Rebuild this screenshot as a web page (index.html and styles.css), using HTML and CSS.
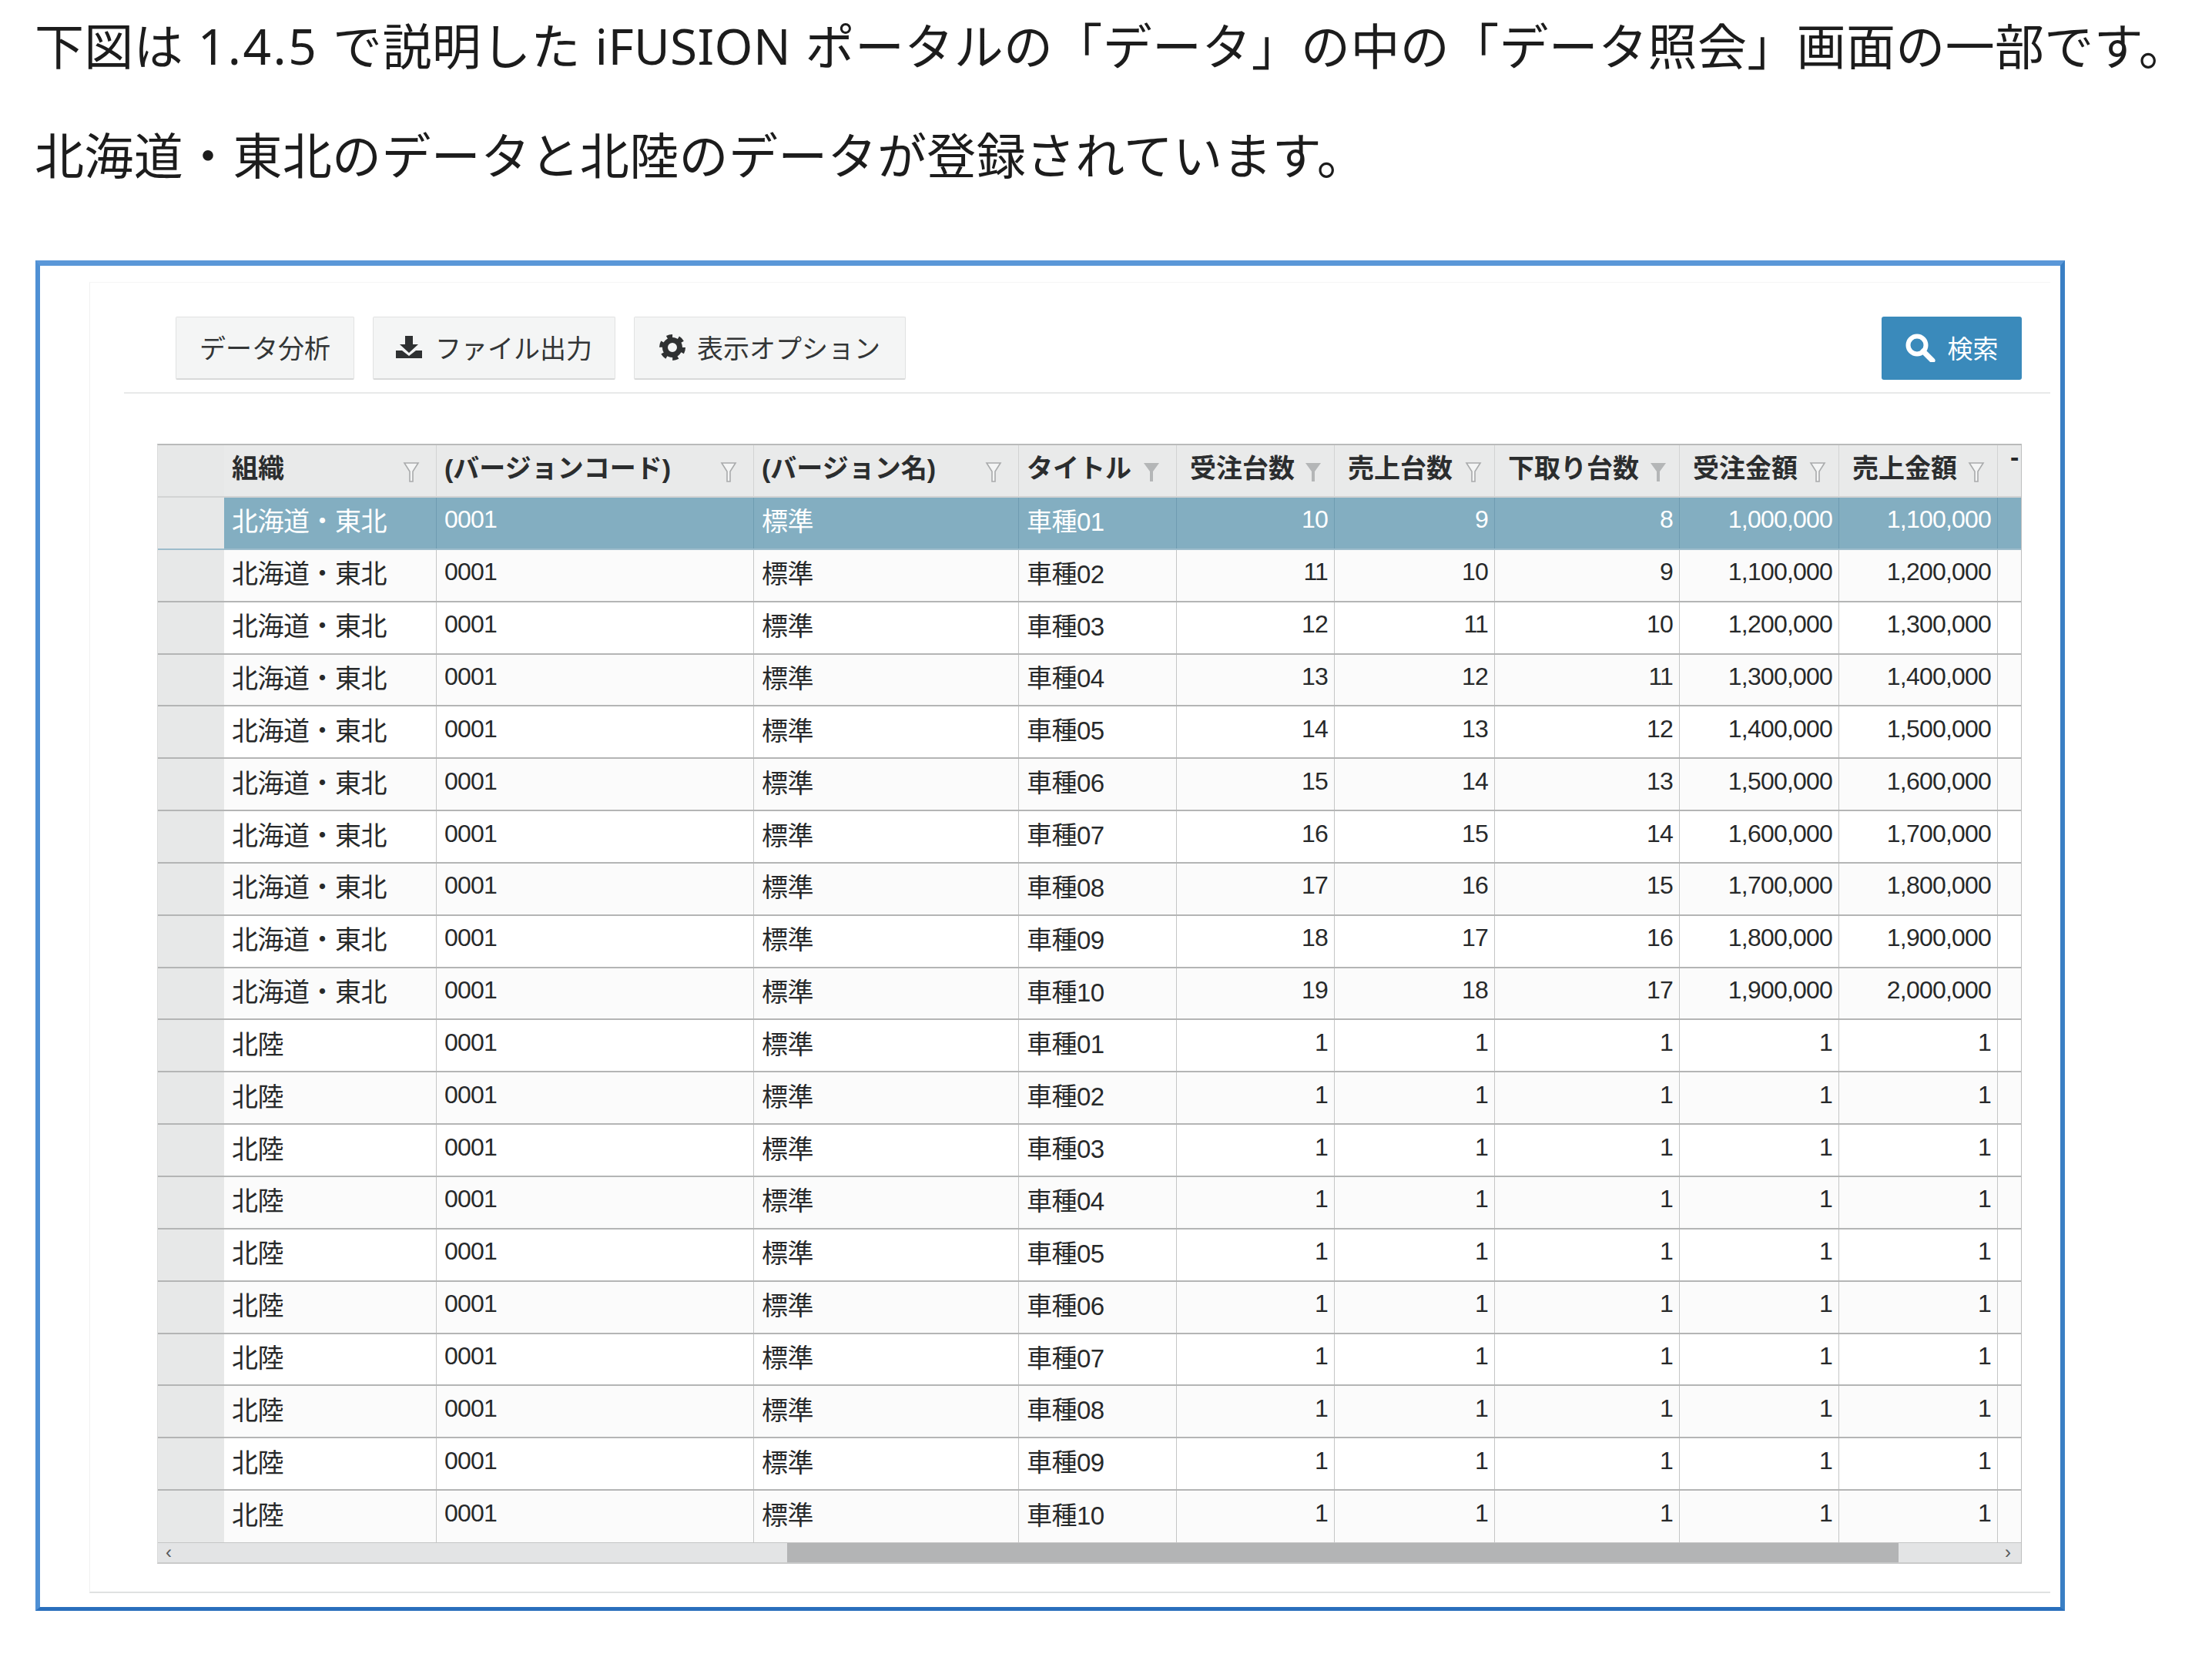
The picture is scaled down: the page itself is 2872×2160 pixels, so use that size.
FILE: index.html
```html
<!DOCTYPE html>
<html lang="ja">
<head>
<meta charset="utf-8">
<title>データ照会</title>
<link rel="stylesheet" href="styles.css">
</head>
<body>
<svg class="defs" width="0" height="0" aria-hidden="true">
  <symbol id="funnel" viewBox="0 0 22 26"><path d="M2 1h18l-7 11v13h-4V12z" fill="#fff" fill-opacity=".5" stroke="#a9abac" stroke-width="1.6"/></symbol>
  <symbol id="funnel-on" viewBox="0 0 22 26"><path d="M1 1h20l-8 11v13H9V12z" fill="#b4b6b7"/></symbol>
</svg>
<p class="lead first">下図は <span class="latin num">1.4.5</span> で説明した <span class="latin">iFUSION</span> ポータルの「データ」の中の「データ照会」画面の一部です。</p>
<p class="lead second">北海道・東北のデータと北陸のデータが登録されています。</p>
<section class="frame">
  <div class="panel">
    <div class="toolbar">
      <button class="btn btn-a">データ分析</button>
      <button class="btn btn-b"><svg class="ico-dl" viewBox="0 0 34 29"><path d="M12 0h10v11h7L17 22 5 11h7z" fill="#2f3132"/><path d="M0 19h8l9 7 9-7h8v10H0z" fill="#2f3132"/></svg>ファイル出力</button>
      <button class="btn btn-c"><svg class="ico-gear" viewBox="0 0 34 34"><circle cx="17" cy="17" r="9.5" fill="none" stroke="#2f3132" stroke-width="7"/><circle cx="17" cy="17" r="14" fill="none" stroke="#2f3132" stroke-width="6" stroke-dasharray="7 7.66"/></svg>表示オプション</button>
      <button class="btn-search"><svg class="ico-search" viewBox="0 0 39 37"><circle cx="15" cy="15" r="11.5" fill="none" stroke="#fff" stroke-width="6"/><path d="M23 23l12 12" stroke="#fff" stroke-width="7" stroke-linecap="round"/></svg>検索</button>
    </div>
    <div class="grid">
      <div class="row head">
        <div class="c"></div>
        <div class="c"><b>組織</b><svg class="fl"><use href="#funnel"/></svg></div>
        <div class="c"><b>(バージョンコード)</b><svg class="fl"><use href="#funnel"/></svg></div>
        <div class="c"><b>(バージョン名)</b><svg class="fl"><use href="#funnel"/></svg></div>
        <div class="c"><b>タイトル</b><svg class="fl"><use href="#funnel-on"/></svg></div>
        <div class="c ind"><b>受注台数</b><svg class="fl"><use href="#funnel-on"/></svg></div>
        <div class="c ind"><b>売上台数</b><svg class="fl"><use href="#funnel"/></svg></div>
        <div class="c ind"><b>下取り台数</b><svg class="fl"><use href="#funnel-on"/></svg></div>
        <div class="c ind"><b>受注金額</b><svg class="fl"><use href="#funnel"/></svg></div>
        <div class="c ind"><b>売上金額</b><svg class="fl"><use href="#funnel"/></svg></div>
        <div class="c more">-</div>
      </div>
      <div class="row sel"><div class="c"></div><div class="c">北海道・東北</div><div class="c">0001</div><div class="c">標準</div><div class="c">車種01</div><div class="c n">10</div><div class="c n">9</div><div class="c n">8</div><div class="c n">1,000,000</div><div class="c n">1,100,000</div><div class="c"></div></div>
      <div class="row"><div class="c"></div><div class="c">北海道・東北</div><div class="c">0001</div><div class="c">標準</div><div class="c">車種02</div><div class="c n">11</div><div class="c n">10</div><div class="c n">9</div><div class="c n">1,100,000</div><div class="c n">1,200,000</div><div class="c"></div></div>
      <div class="row"><div class="c"></div><div class="c">北海道・東北</div><div class="c">0001</div><div class="c">標準</div><div class="c">車種03</div><div class="c n">12</div><div class="c n">11</div><div class="c n">10</div><div class="c n">1,200,000</div><div class="c n">1,300,000</div><div class="c"></div></div>
      <div class="row"><div class="c"></div><div class="c">北海道・東北</div><div class="c">0001</div><div class="c">標準</div><div class="c">車種04</div><div class="c n">13</div><div class="c n">12</div><div class="c n">11</div><div class="c n">1,300,000</div><div class="c n">1,400,000</div><div class="c"></div></div>
      <div class="row"><div class="c"></div><div class="c">北海道・東北</div><div class="c">0001</div><div class="c">標準</div><div class="c">車種05</div><div class="c n">14</div><div class="c n">13</div><div class="c n">12</div><div class="c n">1,400,000</div><div class="c n">1,500,000</div><div class="c"></div></div>
      <div class="row"><div class="c"></div><div class="c">北海道・東北</div><div class="c">0001</div><div class="c">標準</div><div class="c">車種06</div><div class="c n">15</div><div class="c n">14</div><div class="c n">13</div><div class="c n">1,500,000</div><div class="c n">1,600,000</div><div class="c"></div></div>
      <div class="row"><div class="c"></div><div class="c">北海道・東北</div><div class="c">0001</div><div class="c">標準</div><div class="c">車種07</div><div class="c n">16</div><div class="c n">15</div><div class="c n">14</div><div class="c n">1,600,000</div><div class="c n">1,700,000</div><div class="c"></div></div>
      <div class="row"><div class="c"></div><div class="c">北海道・東北</div><div class="c">0001</div><div class="c">標準</div><div class="c">車種08</div><div class="c n">17</div><div class="c n">16</div><div class="c n">15</div><div class="c n">1,700,000</div><div class="c n">1,800,000</div><div class="c"></div></div>
      <div class="row"><div class="c"></div><div class="c">北海道・東北</div><div class="c">0001</div><div class="c">標準</div><div class="c">車種09</div><div class="c n">18</div><div class="c n">17</div><div class="c n">16</div><div class="c n">1,800,000</div><div class="c n">1,900,000</div><div class="c"></div></div>
      <div class="row"><div class="c"></div><div class="c">北海道・東北</div><div class="c">0001</div><div class="c">標準</div><div class="c">車種10</div><div class="c n">19</div><div class="c n">18</div><div class="c n">17</div><div class="c n">1,900,000</div><div class="c n">2,000,000</div><div class="c"></div></div>
      <div class="row"><div class="c"></div><div class="c">北陸</div><div class="c">0001</div><div class="c">標準</div><div class="c">車種01</div><div class="c n">1</div><div class="c n">1</div><div class="c n">1</div><div class="c n">1</div><div class="c n">1</div><div class="c"></div></div>
      <div class="row"><div class="c"></div><div class="c">北陸</div><div class="c">0001</div><div class="c">標準</div><div class="c">車種02</div><div class="c n">1</div><div class="c n">1</div><div class="c n">1</div><div class="c n">1</div><div class="c n">1</div><div class="c"></div></div>
      <div class="row"><div class="c"></div><div class="c">北陸</div><div class="c">0001</div><div class="c">標準</div><div class="c">車種03</div><div class="c n">1</div><div class="c n">1</div><div class="c n">1</div><div class="c n">1</div><div class="c n">1</div><div class="c"></div></div>
      <div class="row"><div class="c"></div><div class="c">北陸</div><div class="c">0001</div><div class="c">標準</div><div class="c">車種04</div><div class="c n">1</div><div class="c n">1</div><div class="c n">1</div><div class="c n">1</div><div class="c n">1</div><div class="c"></div></div>
      <div class="row"><div class="c"></div><div class="c">北陸</div><div class="c">0001</div><div class="c">標準</div><div class="c">車種05</div><div class="c n">1</div><div class="c n">1</div><div class="c n">1</div><div class="c n">1</div><div class="c n">1</div><div class="c"></div></div>
      <div class="row"><div class="c"></div><div class="c">北陸</div><div class="c">0001</div><div class="c">標準</div><div class="c">車種06</div><div class="c n">1</div><div class="c n">1</div><div class="c n">1</div><div class="c n">1</div><div class="c n">1</div><div class="c"></div></div>
      <div class="row"><div class="c"></div><div class="c">北陸</div><div class="c">0001</div><div class="c">標準</div><div class="c">車種07</div><div class="c n">1</div><div class="c n">1</div><div class="c n">1</div><div class="c n">1</div><div class="c n">1</div><div class="c"></div></div>
      <div class="row"><div class="c"></div><div class="c">北陸</div><div class="c">0001</div><div class="c">標準</div><div class="c">車種08</div><div class="c n">1</div><div class="c n">1</div><div class="c n">1</div><div class="c n">1</div><div class="c n">1</div><div class="c"></div></div>
      <div class="row"><div class="c"></div><div class="c">北陸</div><div class="c">0001</div><div class="c">標準</div><div class="c">車種09</div><div class="c n">1</div><div class="c n">1</div><div class="c n">1</div><div class="c n">1</div><div class="c n">1</div><div class="c"></div></div>
      <div class="row"><div class="c"></div><div class="c">北陸</div><div class="c">0001</div><div class="c">標準</div><div class="c">車種10</div><div class="c n">1</div><div class="c n">1</div><div class="c n">1</div><div class="c n">1</div><div class="c n">1</div><div class="c"></div></div>
      <div class="scroll">
        <div class="track"><span class="arrow">‹</span></div>
        <div class="thumb"></div>
        <div class="track end"><span class="arrow">›</span></div>
      </div>
    </div>
  </div>
</section>
</body>
</html>
```

FILE: styles.css
```css
* { box-sizing: border-box; }
html, body { margin: 0; padding: 0; background: #fff; }
body {
  width: 2872px;
  height: 2160px;
  overflow: hidden;
  font-family: "Noto Sans CJK JP", "Noto Sans", sans-serif;
  color: #2b2d2e;
}
.defs { position: absolute; }
.lead {
  margin: 0 0 0 45px;
  font-size: 64px;
  line-height: 92px;
  letter-spacing: 0.35px;
  color: #1c1c1c;
  white-space: nowrap;
}
.lead.first { padding-top: 10px; word-spacing: 4px; }
.lead.second { padding-top: 46px; }
.latin { font-family: "Noto Sans", sans-serif; }
.latin.num { letter-spacing: 2.5px; }

.frame {
  margin: 94px 0 0 46px;
  width: 2635px;
  height: 1753px;
  border-style: solid;
  border-width: 7px 6px 5px 6px;
  border-color: #5a97d8 #3a7fc4 #2a6fbc #4f90d4;
  padding: 21px 13px 18px 64px;
}
.panel {
  height: 100%;
  border-top: 1px solid #f5f6f6;
  border-left: 1px solid #f0f1f1;
  border-bottom: 2px solid #dfe1e1;
}
.toolbar {
  display: flex;
  align-items: stretch;
  gap: 24px;
  height: 144px;
  margin-left: 44px;
  padding: 44px 37px 17px 67px;
  border-bottom: 2px solid #e8e9e9;
}
.btn {
  display: flex;
  align-items: center;
  justify-content: center;
  height: 82px;
  padding: 0 0 2px;
  background: #f4f5f5;
  border: 1px solid #e1e2e2;
  border-bottom: 2px solid #d9dada;
  border-radius: 2px;
  font: 400 34px "Noto Sans CJK JP", sans-serif;
  color: #333536;
}
.btn-a { width: 232px; }
.btn-b { width: 315px; gap: 17px; }
.btn-c { width: 353px; gap: 15px; }
.ico-dl { width: 34px; height: 29px; }
.ico-gear { width: 34px; height: 34px; }
.btn-search {
  display: flex;
  align-items: center;
  justify-content: center;
  gap: 16px;
  width: 182px;
  height: 82px;
  margin-left: auto;
  background: #3a8abb;
  border: 0;
  border-radius: 3px;
  font: 400 33px "Noto Sans CJK JP", sans-serif;
  color: #fff;
  padding: 0 0 2px;
}
.ico-search { width: 39px; height: 37px; }

.grid {
  display: grid;
  grid-template-columns: minmax(0, 1fr);
  grid-template-rows: 68px repeat(20, 1fr) 25px;
  width: 2421px;
  height: 1454px;
  margin: 65px 0 0 87px;
  border-top: 2px solid #b9baba;
  border-bottom: 2px solid #c9caca;
  border-right: 1px solid #bdbebe;
  border-left: 1px solid #dadbdb;
}
.row {
  display: grid;
  grid-template-columns: 86px 276px 412px 344px 205px 205px 208px 240px 207px 206px minmax(0, 1fr);
  min-height: 0;
  background: #fff;
  border-bottom: 2px solid #b4b5b5;
  color: #27292a;
}
.row:nth-child(odd) { background: #fbfbfb; }
.row:nth-last-child(2) { border-bottom: 1px solid #c4c5c5; }
.c {
  display: flex;
  align-items: center;
  padding: 0 8px 8px 10px;
  border-right: 1px solid #c5c6c6;
  white-space: nowrap;
  min-width: 0;
  font-family: "Liberation Sans", "Noto Sans CJK JP", sans-serif;
  font-size: 34px;
  letter-spacing: -0.5px;
}
.c:first-child { background: #e7e8e8; padding: 0; border-right: 0; }
.c:last-child { border-right: 0; }
.c:nth-child(3), .n { font-size: 32px; letter-spacing: -0.8px; }
.c:nth-child(5) { font-size: 33px; }
.n { justify-content: flex-end; }

.head { border-bottom: 2px solid #d2d3d3; }
.row.head { background: #e9eaea; }
.head .c { justify-content: space-between; padding: 0 21px 12px 10px; border-right-color: #d2d3d3; font-size: 34px; }
.head b { font-weight: 700; color: #2b2d2e; letter-spacing: 0; }
.head .c.ind { padding-left: 17px; padding-right: 16px; }
.fl { width: 22px; height: 26px; flex: none; margin-top: 16px; }
.head .c.more { align-items: flex-start; padding: 0 0 0 16px; font-weight: 700; line-height: 30px; }

.sel.row { background: #83aec1; color: #fff; border-bottom-color: #9dbccb; }
.sel .c { border-right-color: #6f9cb1; }
.sel .c:first-child { background: #e7e8e8; }

.scroll {
  display: flex;
  min-height: 0;
  background: #b3b4b5;
}
.track {
  display: flex;
  align-items: center;
  width: 817px;
  padding-left: 10px;
  background: #e3e4e5;
  color: #55585a;
  font: 400 24px "Liberation Sans", sans-serif;
}
.thumb { flex: 1; }
.track.end { width: 159px; justify-content: flex-end; padding: 0 13px 0 0; }
```
